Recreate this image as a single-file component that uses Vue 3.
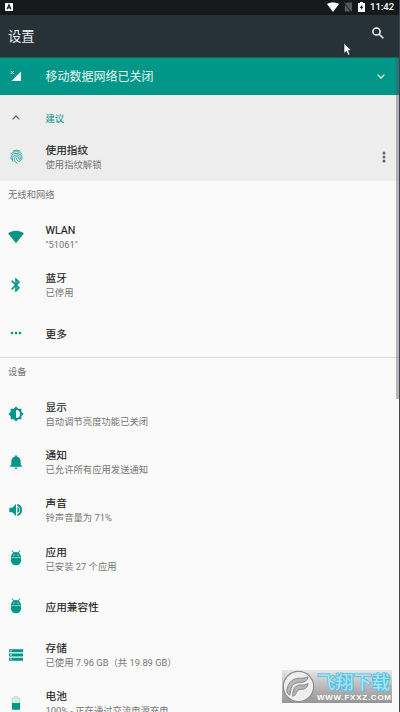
<script setup>
const network = [
  { icon: 'wifi', title: 'WLAN', sub: '"51061"' },
  { icon: 'bluetooth', title: '蓝牙', sub: '已停用' },
  { icon: 'more', title: '更多' },
]
const device = [
  { icon: 'display', title: '显示', sub: '自动调节亮度功能已关闭' },
  { icon: 'bell', title: '通知', sub: '已允许所有应用发送通知' },
  { icon: 'sound', title: '声音', sub: '铃声音量为 71%' },
  { icon: 'android', title: '应用', sub: '已安装 27 个应用' },
  { icon: 'android', title: '应用兼容性' },
  { icon: 'storage', title: '存储', sub: '已使用 7.96 GB（共 19.89 GB）' },
  { icon: 'battery', title: '电池', sub: '100% - 正在通过交流电源充电' },
]
const groups = [
  { name: '无线和网络', rows: network },
  { name: '设备', rows: device },
]
const paths = {
  wifi: 'M12 21.5 24 6.5C23.5 6.1 18.9 2.5 12 2.5S.5 6.1 0 6.5z',
  bluetooth: 'M17.710 7.710 12 2h-1v7.590L6.410 5 5 6.410 10.590 12 5 17.590 6.410 19 11 14.410V22h1l5.710-5.710L13.410 12zM13 5.830l1.880 1.880L13 9.590zm1.880 10.460L13 18.170v-3.760z',
  more: 'M6 10a2 2 0 1 0 0 4 2 2 0 0 0 0-4zm12 0a2 2 0 1 0 0 4 2 2 0 0 0 0-4zm-6 0a2 2 0 1 0 0 4 2 2 0 0 0 0-4z',
  display: 'M20 15.310 23.310 12 20 8.690V4h-4.690L12 .690 8.690 4H4v4.690L.690 12 4 15.310V20h4.690L12 23.310 15.310 20H20zM12 18V6a6 6 0 0 1 0 12z',
  bell: 'M12 22.500a2.200 2.200 0 0 0 2.200-2.200H9.800a2.200 2.200 0 0 0 2.200 2.200zm7-6.500v-5c0-3.400-2-6-5.300-6.700V3.500a1.700 1.700 0 0 0-3.400 0v.8C7 5 5 7.600 5 11v5l-2 2v1.300h18V18z',
  sound: 'M2 8.500v7h4.500l5.500 5.500V3L6.500 8.500zm15 3.500A4.500 4.500 0 0 0 14 7.500v9a4.500 4.500 0 0 0 3-4.500zM14 3v2.600a7 7 0 0 1 0 12.800V21a9.300 9.300 0 0 0 0-18z',
  android: 'M4.500 11.500V16a7.500 7 0 0 0 15 0v-4.500zM16.300 4.400l2.100-2.600-.9-.8-2.400 2.800A7 7 0 0 0 12 3c-1.100 0-2.200.3-3.100.8L6.500 1l-.9.8 2.100 2.600A7.400 7.400 0 0 0 4.500 10v.7h15V10a7.400 7.400 0 0 0-3.200-5.600zM9 8.600a1 1 0 1 1 0-2 1 1 0 0 1 0 2zm6 0a1 1 0 1 1 0-2 1 1 0 0 1 0 2z',
  storage: 'M1.500 20.500h21v-4.500h-21zm2-3.200h2v2h-2zM1.500 3.500V8h21V3.500zm4 3.200h-2v-2h2zM1.500 14.300h21V9.700h-21zm2-3.300h2v2h-2z',
}
</script>

<template>
  <div class="screen">
    <header class="status">
      <svg class="ime" viewBox="0 0 8 8"><rect width="8" height="8" rx=".8" fill="#fff" /><path d="M2 6.300 4 1.700l2 4.600M2.800 4.900h2.400" fill="none" stroke="#15191c" stroke-width="1.100" /></svg>
      <svg class="s-wifi" viewBox="0 0 24 20"><path d="M12 20 24 4C18 0 6 0 0 4z" fill="#fff" /></svg>
      <svg class="s-sim" viewBox="0 0 8 10"><path d="M3 .5h5v9H.8V3z" fill="#555a5c" /><path d="M0 .8 7.800 9.800" stroke="#15191c" stroke-width="1.300" /><path d="M.2.300 8 9.200" stroke="#707476" stroke-width=".7" /></svg>
      <svg class="s-bat" viewBox="0 0 7 10"><path d="M2 0h3v1h2v9H0V1h2z" fill="#fff" /><path d="M4.200 2.400 1.700 5.900h1.500v2.400l2.200-3.500H4z" fill="#15191c" /></svg>
      <span class="clock">11:42</span>
    </header>

    <div class="appbar">
      <h1>设置</h1>
      <svg class="search" viewBox="0 0 12 12"><circle cx="4.500" cy="4.500" r="3.600" /><path d="m7.200 7.200 4.100 4.100" /></svg>
    </div>

    <div class="banner">
      <div class="lead">
        <svg class="signal" viewBox="0 0 12 12"><path d="M11 1.500V11H1.500z" fill="#fff" /><path d="m.8 1 3 3m0-3-3 3" stroke="#d5f0ec" stroke-width="1" /></svg>
      </div>
      <span class="banner-text">移动数据网络已关闭</span>
      <svg class="chev" viewBox="0 0 8 5"><path d="m.6.600 3.400 3.400L7.400.600" /></svg>
    </div>

    <section class="suggest">
      <div class="s-head">
        <div class="lead"><svg class="chev up" viewBox="0 0 8 5"><path d="M.6 4.400 4 1l3.400 3.400" /></svg></div>
        <span>建议</span>
      </div>
      <div class="s-item">
        <div class="lead">
          <svg class="finger" viewBox="0 0 14 16">
            <path d="M3 2.200Q7 0 11 2.200M.9 5.500Q3.200 2.700 7 2.700t6.100 2.800M1.500 11.500C.2 7 3 4.700 7 4.700s7 3 5.600 6.500c-.8 1.500-3 1-3-1S8.500 8.200 7 8.200s-3 1.500-2.200 3.600 1.600 2.700 3.200 3.500M3.300 13.600C1.500 9 3.800 6.400 7 6.400s4.800 2 4.200 4.300M7 9.900c.1 2.300 1.500 3.500 4 3.300" />
          </svg>
        </div>
        <div class="text"><b>使用指纹</b><small>使用指纹解锁</small></div>
        <svg class="dots" viewBox="0 0 4 12"><circle cx="2" cy="2" r="1.500" /><circle cx="2" cy="6" r="1.500" /><circle cx="2" cy="10" r="1.500" /></svg>
      </div>
    </section>

    <section v-for="g in groups" :key="g.name" class="group">
      <h2>{{ g.name }}</h2>
      <div v-for="r in g.rows" :key="r.title" class="row">
        <div class="lead">
          <svg v-if="r.icon === 'battery'" class="icon" viewBox="0 0 24 24"><path d="M10 2.500h4v2h3.500v17h-11v-17H10z" fill="#d5f0ec" stroke="#8bcfc7" stroke-width="1" /><path d="M6 12h12v10H6z" fill="#009688" /></svg>
          <svg v-else class="icon" :class="r.icon" viewBox="0 0 24 24"><path :d="paths[r.icon]" fill="#009688" fill-rule="evenodd" /></svg>
        </div>
        <div class="text"><b>{{ r.title }}</b><small v-if="r.sub">{{ r.sub }}</small></div>
      </div>
    </section>

    <div class="scrollbar"></div>
    <div class="edge"></div>
    <svg class="cursor" viewBox="0 0 9 14"><path d="M1 1v10.500l2.400-2.200 1.700 3.900 1.900-.8-1.700-3.800h3z" fill="#fff" stroke="#15191c" stroke-width=".6" /></svg>

    <div class="mark">
      <svg class="logo" viewBox="0 0 34 34">
        <circle cx="17" cy="17" r="15.600" fill="#eee" stroke="#8c8c8c" stroke-width="1.200" />
        <path d="M5 21C6 12 12 8 19 8.500c4 .3 6-1 8-1.500-1 4-4 6-8 6-6 0-9 2-10 8l-1 5c-2-1-3-3-3-5z" fill="#b5b5b5" stroke="#777" stroke-width=".8" />
        <path d="M11 27c0-8 3-12 9-11.500 3 .2 5-.5 7-1.500-1 4-3 6-7 6-3 0-4 1-5 3-1 2-2 4-4 4z" fill="#b5b5b5" stroke="#777" stroke-width=".8" />
      </svg>
      <div class="mark-text"><span class="cn">飞翔下载</span><span class="url">WWW.FXXZ.COM</span></div>
    </div>
  </div>
</template>

<style>
body { margin: 0; overflow: hidden; }
</style>

<style scoped>
.screen {
  position: relative;
  width: 400px;
  height: 712px;
  overflow: hidden;
  background: #fafafa;
  font-family: Roboto, "Noto Sans CJK SC", sans-serif;
  color: #212121;
}
svg { display: block; flex: none; }
.status {
  display: flex;
  align-items: center;
  box-sizing: border-box;
  height: 15px;
  padding: 0 6px 1px 5px;
  background: #15191c;
}
.ime { width: 8px; height: 8px; }
.s-wifi { width: 12px; height: 10px; margin-left: auto; }
.s-sim { width: 8px; height: 10px; margin-left: 5px; }
.s-bat { width: 7px; height: 10px; margin-left: 6px; }
.clock { margin-left: 5px; width: 24px; color: #fff; font-size: 9.500px; font-weight: 500; line-height: 14px; white-space: nowrap; }
.appbar {
  display: flex;
  justify-content: space-between;
  box-sizing: border-box;
  height: 42px;
  padding: 12px 16px 0 8px;
  background: #263238;
}
h1 { margin: 0; color: #eef1f2; font-size: 13.300px; font-weight: 400; line-height: 19px; }
.search { width: 12px; height: 12px; fill: none; stroke: #fff; stroke-width: 1.500; }
.banner {
  display: flex;
  align-items: center;
  box-sizing: border-box;
  height: 37.500px;
  padding-right: 15px;
  background: #009688;
  border-top: 1px solid #155f5c;
}
.lead { display: flex; flex: none; width: 37.500px; padding-left: 8px; }
.banner .lead { padding-left: 10px; width: 35.500px; }
.signal { width: 12px; height: 12px; }
.banner-text { flex: 1; padding-top: 1px; color: #e8f6f4; font-size: 12px; line-height: 18px; }
.chev { width: 8px; height: 5px; fill: none; stroke: #fff; stroke-width: 1.300; }
.up { margin-left: 4px; stroke: #666; }
.suggest { height: 86px; background: #ededed; }
.s-head { display: flex; align-items: center; height: 46px; color: #009688; font-size: 9.330px; }
.s-item { display: flex; align-items: center; height: 32px; padding-right: 14px; }
.finger { width: 13px; height: 15px; margin-left: 1.500px; fill: none; stroke: #26a69a; stroke-width: 1; }
.dots { width: 4px; height: 12px; fill: #666; }
.text { display: flex; flex: 1; flex-direction: column; padding-top: 2.600px; white-space: nowrap; }
.s-item .text { padding-top: 2px; }
b { font-size: 10.670px; font-weight: 400; line-height: 14px; -webkit-text-stroke: .15px #212121; }
small { color: #757575; font-size: 9.330px; line-height: 14px; }
.group + .group { border-top: 1px solid #dcdcdc; }
h2 { margin: 0; padding: 5px 8px 0; box-sizing: border-box; height: 32px; color: #757575; font-size: 9.330px; font-weight: 400; line-height: 17px; }
.group { padding-top: .5px; }
.group + .group { padding-top: 0; }
.group + .group h2 { height: 31.300px; }
.row { display: flex; align-items: center; height: 48.200px; }
.group:not(.group + .group) .row { height: 48.100px; }
.icon { width: 16px; height: 16px; }
.bluetooth path { stroke: #009688; stroke-width: .7; }
.scrollbar { position: absolute; top: 58px; right: 1px; width: 3px; height: 341px; background: rgba(80, 80, 85, .4); }
.edge { position: absolute; top: 0; right: 0; width: 1px; height: 712px; background: #42434e; }
.cursor { position: absolute; left: 343px; top: 42px; width: 9px; height: 14px; }
.mark {
  position: absolute;
  left: 282px;
  top: 670px;
  display: flex;
  width: 110px;
  height: 33px;
  background: linear-gradient(#e6e6e6, #b5b5b5 55%, #969696);
}
.logo { width: 33px; height: 33px; }
.mark-text { display: flex; flex-direction: column; margin-left: 2px; white-space: nowrap; }
.cn { height: 24px; color: #a5e3f7; font-size: 18.300px; font-weight: 500; line-height: 26px; -webkit-text-stroke: 1.600px #4dbbe0; paint-order: stroke fill; }
.url { color: #fff; font: 700 8px/8px "Liberation Sans", sans-serif; letter-spacing: .75px; }
</style>
